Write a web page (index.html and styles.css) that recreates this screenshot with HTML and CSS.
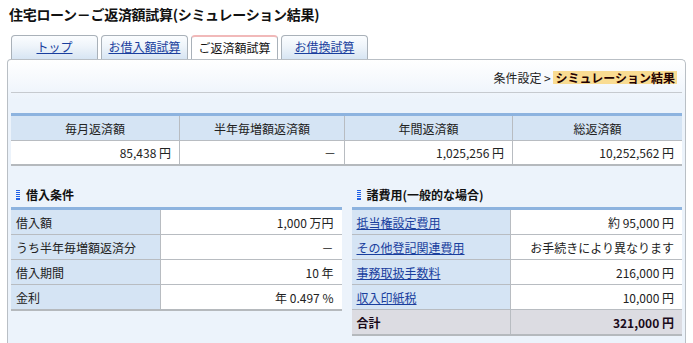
FILE: index.html
```html
<!DOCTYPE html>
<html lang="ja">

<head>
    <meta charset="UTF-8">
    <title>住宅ローン－ご返済額試算(シミュレーション結果)</title>
    <link rel="stylesheet" href="styles.css">
</head>

<body>
    <div class="page">
        <h1 class="page-title">住宅ローン－ご返済額試算(シミュレーション結果)</h1>

        <ul class="tabs">
            <li><a href="#">トップ</a></li>
            <li><a href="#">お借入額試算</a></li>
            <li class="active"><span>ご返済額試算</span></li>
            <li><a href="#">お借換試算</a></li>
        </ul>

        <div class="panel">
            <div class="crumb">条件設定 &gt; <strong>シミュレーション結果</strong></div>

            <table class="summary">
                <tr>
                    <th class="c1">毎月返済額</th>
                    <th class="c2">半年毎増額返済額</th>
                    <th class="c3">年間返済額</th>
                    <th>総返済額</th>
                </tr>
                <tr>
                    <td>85,438 円</td>
                    <td>－</td>
                    <td>1,025,256 円</td>
                    <td>10,252,562 円</td>
                </tr>
            </table>

            <div class="cols">
                <div class="col">
                    <h3 class="sec-title">
                        <svg class="sec-icon" width="4" height="10" viewBox="0 0 4 10">
                            <rect y="0" width="4" height="1" fill="#1f5fe6"/>
                            <rect y="2" width="4" height="1" fill="#1f5fe6"/>
                            <rect y="4" width="4" height="1" fill="#1f5fe6"/>
                            <rect y="6" width="4" height="1" fill="#1f5fe6"/>
                            <rect y="8" width="4" height="2" fill="#1f5fe6"/>
                        </svg>借入条件
                    </h3>
                    <table class="detail loan">
                        <tr><th>借入額</th><td>1,000 万円</td></tr>
                        <tr><th>うち半年毎増額返済分</th><td>－</td></tr>
                        <tr><th>借入期間</th><td>10 年</td></tr>
                        <tr><th>金利</th><td>年 0.497 %</td></tr>
                    </table>
                </div>

                <div class="col">
                    <h3 class="sec-title">
                        <svg class="sec-icon" width="4" height="10" viewBox="0 0 4 10">
                            <rect y="0" width="4" height="1" fill="#1f5fe6"/>
                            <rect y="2" width="4" height="1" fill="#1f5fe6"/>
                            <rect y="4" width="4" height="1" fill="#1f5fe6"/>
                            <rect y="6" width="4" height="1" fill="#1f5fe6"/>
                            <rect y="8" width="4" height="2" fill="#1f5fe6"/>
                        </svg>諸費用(一般的な場合)
                    </h3>
                    <table class="detail costs">
                        <tr><th><a href="#">抵当権設定費用</a></th><td>約 95,000 円</td></tr>
                        <tr><th><a href="#">その他登記関連費用</a></th><td>お手続きにより異なります</td></tr>
                        <tr><th><a href="#">事務取扱手数料</a></th><td>216,000 円</td></tr>
                        <tr><th><a href="#">収入印紙税</a></th><td>10,000 円</td></tr>
                        <tr class="total"><th>合計</th><td>321,000 円</td></tr>
                    </table>
                </div>
            </div>
        </div>
    </div>
</body>

</html>
```

FILE: styles.css
```css
body {
    margin: 0;
    font-family: "Noto Sans CJK JP", sans-serif;
    font-size: 12px;
    color: #222;
    background: #fff;
}

a {
    color: #1a3f9e;
}

.page {
    padding: 0 7px;
}

.page-title {
    margin: 0;
    padding: 4px 0 0 2px;
    font-size: 14px;
    line-height: 20px;
    font-weight: bold;
    color: #111;
    letter-spacing: -0.3px;
}

/* tabs */
.tabs {
    display: flex;
    gap: 3px;
    list-style: none;
    margin: 11px 0 0;
    padding: 0 0 0 4px;
    height: 24px;
}

.tabs li {
    width: 87px;
    box-sizing: border-box;
    border: 1px solid #a9b1b9;
    border-bottom: none;
    border-radius: 4px 4px 0 0;
    background: linear-gradient(#fbfdff 0%, #eef4fa 45%, #d7e5f3 100%);
    text-align: center;
    line-height: 22px;
}

.tabs li.active {
    background: #fff;
    border-top: 2px solid #f1b9b9;
    line-height: 21px;
    color: #111;
}

/* panel */
.panel {
    border: 1px solid #b9bfc5;
    border-bottom: none;
    border-radius: 4px 5px 0 0;
    background: linear-gradient(#fff 0px, #ecf3fb 40px);
    padding: 0 3px 30px;
}

.crumb {
    text-align: right;
    padding: 11px 5px 8px 0;
    line-height: 13px;
    border-bottom: 1px solid #c6cacf;
}

.crumb strong {
    display: inline-block;
    background: #f9dc92;
    padding: 0 2px;
    color: #220000;
}

/* tables */
table {
    width: 100%;
    border-collapse: collapse;
    table-layout: fixed;
}

.summary {
    margin-top: 20px;
    border-top: 3px solid #8db3df;
    border-bottom: 2px solid #b5b9bd;
}

.summary .c1 {
    width: 168px;
}

.summary .c2 {
    width: 164px;
}

.summary .c3 {
    width: 167px;
}

.summary th {
    height: 24px;
    padding: 0;
    background: #d5e4f4;
    font-weight: normal;
    border-left: 1px solid #b8bcc1;
    border-bottom: 1px solid #b8bcc1;
}

.summary td {
    height: 23px;
    padding: 0 8px;
    background: #fff;
    text-align: right;
    border-left: 1px solid #b8bcc1;
}

.summary th:first-child,
.summary td:first-child {
    border-left: none;
}

.cols {
    display: flex;
    gap: 10px;
    margin-top: 22px;
}

.col {
    flex: 1;
}

.sec-title {
    margin: 0 0 5px;
    padding-left: 5px;
    font-size: 12px;
    line-height: 14px;
    color: #111;
    display: flex;
    align-items: center;
}

.sec-icon {
    margin-right: 6px;
}

.detail {
    border-top: 3px solid #8db3df;
    border-bottom: 2px solid #b5b9bd;
}

.detail th {
    height: 24px;
    padding: 0 5px;
    background: #d5e4f4;
    font-weight: normal;
    text-align: left;
    border-bottom: 1px solid #b8bcc1;
    border-right: 1px solid #b8bcc1;
    white-space: nowrap;
}

.detail td {
    height: 24px;
    padding: 0 8px;
    background: #fff;
    text-align: right;
    border-bottom: 1px solid #b8bcc1;
    white-space: nowrap;
}

.detail tr:last-child th,
.detail tr:last-child td {
    border-bottom: none;
}

.loan th {
    width: 149px;
    box-sizing: border-box;
}

.costs th {
    width: 159px;
    box-sizing: border-box;
}

.detail .total th,
.detail .total td {
    background: #dcdce2;
    font-weight: bold;
    color: #1a0a1a;
}
```
